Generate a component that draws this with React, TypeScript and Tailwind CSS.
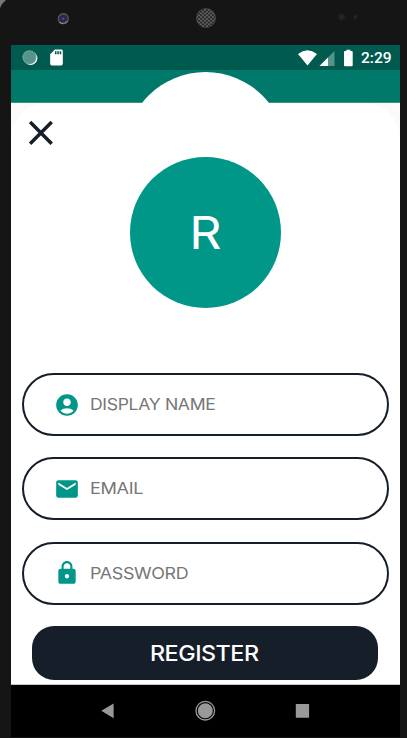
import type { ReactNode } from "react";
import { MdAccountCircle, MdEmail, MdLock, MdSdCard } from "react-icons/md";

function Bezel() {
  return (
    <svg className="block h-[45px] w-[407px] shrink-0" viewBox="0 0 407 45">
      <defs>
        <radialGradient id="lens">
          <stop offset="0" stopColor="#5858c0" />
          <stop offset="0.35" stopColor="#22224c" />
          <stop offset="0.7" stopColor="#34343c" />
          <stop offset="1" stopColor="#66666a" />
        </radialGradient>
        <pattern id="mesh" width="4" height="3.6" patternUnits="userSpaceOnUse">
          <rect width="4" height="3.6" fill="#5c5c5c" />
          <circle cx="1" cy="0.9" r="0.95" fill="#191919" />
          <circle cx="3" cy="2.7" r="0.95" fill="#191919" />
        </pattern>
        <radialGradient id="sensor">
          <stop offset="0" stopColor="#2b2b2b" />
          <stop offset="1" stopColor="#151515" />
        </radialGradient>
      </defs>
      <path d="M0 0H6Q2 3 0 8Z" fill="#77777a" />
      <circle cx="63.3" cy="18.7" r="5.6" fill="url(#lens)" />
      <path d="M59.5 22.2Q63.5 25.4 67.6 21" fill="none" stroke="#8b8b8b" strokeWidth="1.1" />
      <circle cx="206" cy="18" r="9.6" fill="url(#mesh)" stroke="#484848" strokeWidth="0.7" />
      <circle cx="341.5" cy="17" r="4.5" fill="url(#sensor)" />
      <circle cx="355.5" cy="17" r="3" fill="url(#sensor)" />
    </svg>
  );
}

function StatusBar() {
  return (
    <div className="flex h-[25px] shrink-0 items-center bg-[#005a4f] pl-[11px] text-white">
      <svg className="h-[16px] w-[16px]" viewBox="0 0 16 16">
        <circle cx="8.6" cy="8.2" r="6.8" fill="#fff" />
        <circle cx="7.4" cy="7.2" r="7" fill="#559489" />
        <circle cx="7.4" cy="7.2" r="6.2" fill="none" stroke="#8db8b0" strokeWidth="1" strokeDasharray="1 1.4" />
      </svg>
      <MdSdCard className="ml-[8.5px] h-[19px] w-[19px]" />
      <svg className="ml-[232.5px] h-[18px] w-[58px]" viewBox="0 0 58 18">
        <path d="M0 5Q9.5 -2.4 19 5L9.5 16.5Z" fill="#fff" />
        <path d="M21.5 17L36.5 2V17Z" fill="#559489" />
        <path d="M21.5 17L30 8.5V17Z" fill="#fff" />
        <path d="M48.4 0.8H52.4V2H53.7Q54.7 2 54.7 3V16.2Q54.7 17.2 53.7 17.2H47Q46 17.2 46 16.2V3Q46 2 47 2H48.4Z" fill="#fff" />
      </svg>
      <span className="relative top-[0.5px] ml-[5px] font-['Roboto',sans-serif] text-[15.5px] font-medium leading-[24px]">2:29</span>
    </div>
  );
}

function Field({ icon, label, stretch }: { icon: ReactNode; label: string; stretch: string }) {
  return (
    <label className="flex h-[63px] w-[367px] shrink-0 items-center rounded-full border-2 border-[#151e29] bg-white pl-[30.5px] text-[#009688]">
      {icon}
      <span className={`ml-[10px] inline-block origin-left text-[16.5px] tracking-[-0.02em] text-[#777777] ${stretch}`}>{label}</span>
    </label>
  );
}

export default function App() {
  return (
    <div className="flex h-[738px] w-[407px] flex-col overflow-hidden bg-[#151515] font-['Inter',sans-serif]">
      <Bezel />
      <div className="ml-[11px] flex h-[692px] w-[389px] shrink-0 flex-col bg-black">
        <StatusBar />
        <header className="relative h-[33px] shrink-0 overflow-hidden bg-[#00796b]">
          <div className="h-full border-b border-[#379488]" />
          <div className="absolute left-[113.5px] top-[2px] h-[161px] w-[161px] rounded-full bg-white" />
        </header>
        <main className="h-[582px] shrink-0 border-b border-[#c9c9c9] bg-[#fafafa]">
          <div className="flex h-[581px] flex-col rounded-t-[36px] bg-white">
            <button className="ml-[17px] mt-[17px] h-[26px] w-[26px] shrink-0" aria-label="Close">
              <svg className="block h-[26px] w-[26px]" viewBox="0 0 26 26">
                <path d="M2.1 2.1L23.7 23.7M23.7 2.1L2.1 23.7" stroke="#151e29" strokeWidth="3.5" />
              </svg>
            </button>
            <div className="ml-[118.5px] mt-[10.5px] flex h-[151px] w-[151px] shrink-0 items-center justify-center rounded-full bg-[#009688] text-[44.5px] text-white">
              <span className="relative top-[1px] inline-block scale-x-[1.13]">R</span>
            </div>
            <form className="ml-[10.5px] mt-[65.5px] flex flex-col gap-[21.3px]">
              <Field icon={<MdAccountCircle size={26} />} label="DISPLAY NAME" stretch="scale-x-[1.068]" />
              <Field icon={<MdEmail size={26} />} label="EMAIL" stretch="scale-x-[1.1]" />
              <Field icon={<MdLock size={26} />} label="PASSWORD" stretch="scale-x-[1.085]" />
            </form>
            <button className="ml-[21px] mt-[21.5px] h-[54px] w-[346px] shrink-0 rounded-[22px] bg-[#151e29] text-[22px] font-medium tracking-[-0.02em] text-white">
              <span className="relative right-[0.5px] inline-block scale-x-[1.06]">REGISTER</span>
            </button>
          </div>
        </main>
        <nav className="flex h-[52px] shrink-0 items-center justify-center">
          <svg className="h-[24px] w-[220px]" viewBox="1.2 0.3 220 24">
            <path d="M6.5 12L18.8 4.8V19.5Z" fill="#999" />
            <circle cx="110.5" cy="12" r="9.3" fill="none" stroke="#999" strokeWidth="1.3" />
            <circle cx="110.5" cy="12" r="7.5" fill="#999" />
            <rect x="201" y="5.2" width="13.3" height="13.8" rx="0.6" fill="#999" />
          </svg>
        </nav>
      </div>
    </div>
  );
}
